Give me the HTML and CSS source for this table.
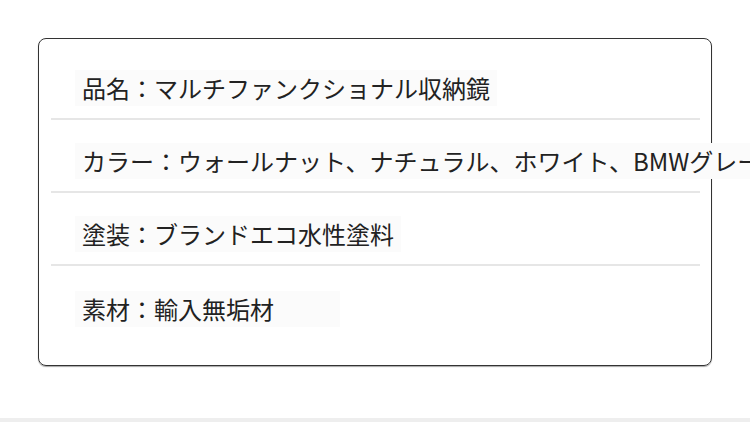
FILE: index.html
```html
<!DOCTYPE html>
<html lang="ja">
<head>
<meta charset="utf-8">
<title>商品仕様</title>
<link rel="stylesheet" href="styles.css">
</head>
<body>
<main class="page">
  <section class="spec">
    <div class="row"><span class="label">品名：マルチファンクショナル収納鏡</span></div>
    <div class="row"><span class="label">カラー：ウォールナット、ナチュラル、ホワイト、BMWグレー</span></div>
    <div class="row"><span class="label">塗装：ブランドエコ水性塗料</span></div>
    <div class="row last"><span class="label wide">素材：輸入無垢材</span></div>
  </section>
</main>
<div class="footer-bar"></div>
</body>
</html>
```
FILE: styles.css
```css
html, body {
  margin: 0;
  padding: 0;
  background: #ffffff;
  overflow: hidden;
}
body {
  font-family: "Noto Sans CJK JP", "Noto Sans", sans-serif;
  color: #222222;
}
.page {
  height: 418px;
  padding: 38px 38px 0 38px;
  box-sizing: border-box;
}
.spec {
  width: 674px;
  height: 328px;
  box-sizing: border-box;
  border: 1px solid #333333;
  border-radius: 8px;
  box-shadow: 0 1px 1px rgba(0, 0, 0, 0.35);
  padding: 8px 11px 0 12px;
}
.row {
  padding: 23px 0 12px 24px;
  border-bottom: 2px solid #e6e6e6;
  white-space: nowrap;
}
.row.last {
  padding-top: 25px;
  border-bottom: none;
}
.label {
  display: inline-block;
  font-size: 24px;
  line-height: 36px;
  padding: 0 7px;
  background: #fbfbfb;
}
.label.wide {
  padding-right: 66px;
}
.footer-bar {
  height: 4px;
  background: #eeeeee;
}
```
